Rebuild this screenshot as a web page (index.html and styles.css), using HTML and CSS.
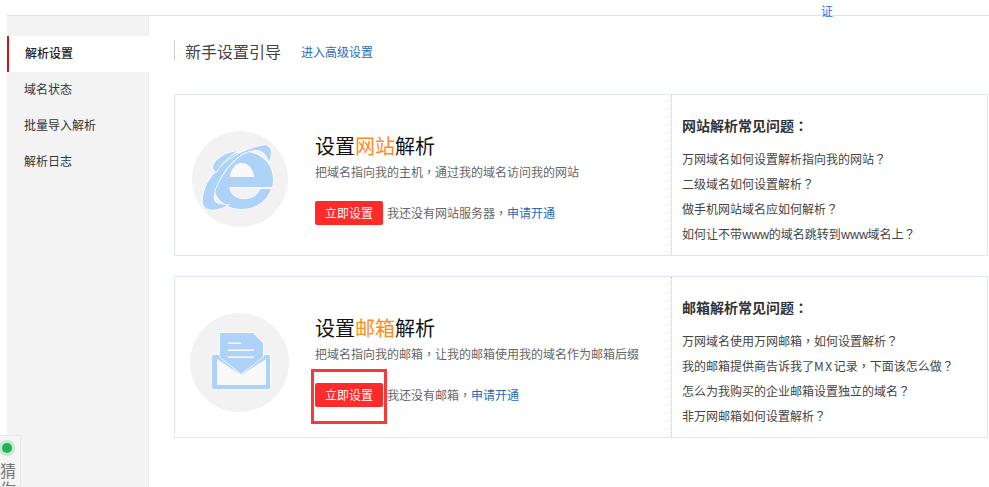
FILE: index.html
```html
<!DOCTYPE html>
<html lang="zh-CN">
<head>
<meta charset="utf-8">
<title>解析设置</title>
<link rel="stylesheet" href="styles.css">
</head>
<body>
<div class="top"><a class="top-link" href="#">证</a></div>
<div class="main">
  <nav class="side">
    <a class="side-item active" href="#">解析设置</a>
    <a class="side-item" href="#">域名状态</a>
    <a class="side-item" href="#">批量导入解析</a>
    <a class="side-item" href="#">解析日志</a>
  </nav>
  <section class="content">
    <div class="head"><h1 class="head-title">新手设置引导</h1><a class="link" href="#">进入高级设置</a></div>
    <div class="card">
      <div class="card-left">
        <div class="circle">
          <svg class="ico" viewBox="0 0 96 96">
            <path class="fill" fill-rule="evenodd" d="M80 56H37C38 63 44 68 52 68C60 68 66 64 68 58H79C75 70 64 78 50 78C34 78 22 68 22 54C22 36 36 21 53 21C70 21 81 34 81 48C81 51 81 54 80 56ZM38 46C39 38 44 32 50 32C56 32 61 38 62 46Z"/>
            <path class="gap" d="M38 46C39 38 44 32 50 32C56 32 61 38 62 46Z"/>
            <path class="fill" d="M68 15C74 13 79 15 79 21C79 25 78 28 77 31C75 24 71 19 64 19C50 19 36 33 27 50C21 61 20 70 25 72C28 73 32 74 36 74C28 79 18 80 14 77C9 74 10 65 14 55C23 36 45 20 68 15Z"/>
            <path class="fill" d="M21 36C22 29 32 22 45 20C37 25 30 32 24 41C22 40 21 38 21 36Z"/>
          </svg>
        </div>
        <div class="intro">
          <h2 class="intro-title">设置<em class="hl">网站</em>解析</h2>
          <p class="desc">把域名指向我的主机<span class="pu" lang="zh-TW">，</span>通过我的域名访问我的网站</p>
          <div class="action"><a class="btn" href="#">立即设置</a><span class="note">我还没有网站服务器<span class="pu" lang="zh-TW">，</span><a class="link" href="#">申请开通</a></span></div>
        </div>
      </div>
      <div class="faq">
        <h3 class="faq-title">网站解析常见问题<span class="pu" lang="zh-TW">：</span></h3>
        <a class="faq-item" href="#">万网域名如何设置解析指向我的网站<span class="pu" lang="zh-TW">？</span></a>
        <a class="faq-item" href="#">二级域名如何设置解析<span class="pu" lang="zh-TW">？</span></a>
        <a class="faq-item" href="#">做手机网站域名应如何解析<span class="pu" lang="zh-TW">？</span></a>
        <a class="faq-item" href="#">如何让不带<span class="www">www</span>的域名跳转到<span class="www">www</span>域名上<span class="pu" lang="zh-TW">？</span></a>
      </div>
    </div>
    <div class="card">
      <div class="card-left">
        <div class="circle big">
          <svg class="ico" viewBox="0 0 99 99">
            <rect class="fill" x="22" y="42" width="58" height="34" rx="1"/>
            <path class="fill" d="M30 20H63L73 30V44L51 61L30 44Z"/>
            <path class="gap" d="M27 46L51 62L76 46V72H27Z"/>
            <path class="gap" d="M38 29.500H51V31H38ZM38 36.500H64V38H38ZM38 43.500H64V45H38Z"/>
          </svg>
        </div>
        <div class="intro">
          <h2 class="intro-title">设置<em class="hl">邮箱</em>解析</h2>
          <p class="desc">把域名指向我的邮箱<span class="pu" lang="zh-TW">，</span>让我的邮箱使用我的域名作为邮箱后缀</p>
          <div class="action"><a class="btn" href="#">立即设置</a><span class="note">我还没有邮箱<span class="pu" lang="zh-TW">，</span><a class="link" href="#">申请开通</a></span><span class="mark"></span></div>
        </div>
      </div>
      <div class="faq">
        <h3 class="faq-title">邮箱解析常见问题<span class="pu" lang="zh-TW">：</span></h3>
        <a class="faq-item" href="#">万网域名使用万网邮箱<span class="pu" lang="zh-TW">，</span>如何设置解析<span class="pu" lang="zh-TW">？</span></a>
        <a class="faq-item" href="#">我的邮箱提供商告诉我了<span class="mx">MX</span>记录<span class="pu" lang="zh-TW">，</span>下面该怎么做<span class="pu" lang="zh-TW">？</span></a>
        <a class="faq-item" href="#">怎么为我购买的企业邮箱设置独立的域名<span class="pu" lang="zh-TW">？</span></a>
        <a class="faq-item" href="#">非万网邮箱如何设置解析<span class="pu" lang="zh-TW">？</span></a>
      </div>
    </div>
  </section>
</div>
<aside class="guess"><span class="dot"></span><span class="guess-text">猜你</span></aside>
</body>
</html>
```

FILE: styles.css
```css
* { box-sizing: border-box; }
html, body { height: 100%; }
body {
  margin: 0;
  height: 487px;
  overflow: hidden;
  background: #fff;
  color: #333;
  font: 12px/1.5 "Noto Sans CJK SC", "Liberation Sans", sans-serif;
  position: relative;
}
a { text-decoration: none; }
.pu { font-family: "Noto Sans CJK TC", "Noto Sans CJK SC", sans-serif; }
.www { letter-spacing: -0.7px; }
.mx { letter-spacing: 1.5px; }
.top {
  height: 16px;
  margin-left: 7px;
  border-bottom: 1px solid #e2e2e2;
  display: flex;
  justify-content: flex-end;
  padding-right: 156px;
}
.top-link { color: #1f6fe0; line-height: 16px; height: 15px; padding-top: 3px; }
.main { display: flex; margin-left: 7px; height: 471px; }
.side {
  width: 142px;
  flex: none;
  background: #f3f3f3;
  padding-top: 20px;
  border-right: 1px solid #ececec;
  display: flex;
  flex-direction: column;
}
.side-item {
  height: 36px;
  line-height: 34px;
  padding-left: 17px;
  color: #333;
}
.side-item.active {
  background: #fff;
  padding-left: 16px;
  border-left: 2px solid #c9151e;
  margin-right: -1px;
  color: #222;
  font-weight: 500;
}
.content { flex: 1; padding: 24px 0 0 25px; min-width: 0; }
.head {
  display: flex;
  align-items: center;
  height: 21px;
  margin-bottom: 33px;
  border-left: 1px solid #ccc;
  padding-left: 10px;
  gap: 20px;
}
.head-title { margin: 0; font-size: 16px; font-weight: 400; color: #444; }
.head .link { padding-top: 2px; }
.link { color: #2a6ab8; }
.card {
  display: flex;
  width: 814px;
  height: 162px;
  margin-bottom: 20px;
  border: 1px solid #dce8f5;
}
.card-left {
  width: 497px;
  flex: none;
  display: flex;
  align-items: flex-start;
  padding: 36px 0 0 17px;
  border-right: 1px dotted #c8c8c8;
}
.circle {
  width: 96px;
  height: 96px;
  flex: none;
  border-radius: 50%;
  background: #f2f2f2;
  margin-right: 27px;
}
.circle.big { width: 99px; height: 99px; margin-left: -2px; margin-right: 26px; }
.ico { display: block; width: 100%; height: 100%; }
.fill { fill: #afd2f9; stroke: #fff; stroke-width: 1.4; paint-order: stroke; }
.gap { fill: #f9f9f9; }
.intro { padding-top: 0; }
.intro-title {
  margin: 0;
  font-size: 20px;
  font-weight: 400;
  line-height: 30px;
  color: #111;
}
.hl { font-style: normal; color: #ff8a1e; }
.desc { margin: 2px 0 0; line-height: 18px; color: #666; white-space: nowrap; }
.action { display: flex; align-items: center; margin-top: 20px; position: relative; }
.btn {
  width: 68px;
  height: 24px;
  line-height: 24px;
  text-align: center;
  color: #fff;
  background: #ff2a2a;
  border-radius: 2px;
}
.note { margin-left: 4px; color: #666; }
.mark {
  position: absolute;
  left: -4px;
  top: -14px;
  width: 76px;
  height: 55px;
  border: 3px solid #f63a3a;
}
.faq { flex: 1; padding: 19px 0 0 10px; }
.faq-title { margin: 0 0 10px; font-size: 14px; line-height: 22px; font-weight: 700; color: #333; }
.faq-item { display: block; height: 25px; line-height: 25px; color: #444; white-space: nowrap; }
.guess {
  position: absolute;
  left: 0;
  top: 435px;
  width: 21px;
  height: 52px;
  background: #f5f5f5;
  border: 1px solid #e8e8e8;
  border-left: 0;
  overflow: hidden;
}
.dot {
  display: block;
  width: 10px;
  height: 10px;
  margin: 7px 0 0 2px;
  border-radius: 50%;
  background: #22b35a;
  box-shadow: 0 0 0 3px #c4e9cf;
}
.guess-text {
  display: block;
  width: 16px;
  margin: 8px 0 0 0;
  font-size: 16px;
  line-height: 18px;
  color: #777;
}
```
